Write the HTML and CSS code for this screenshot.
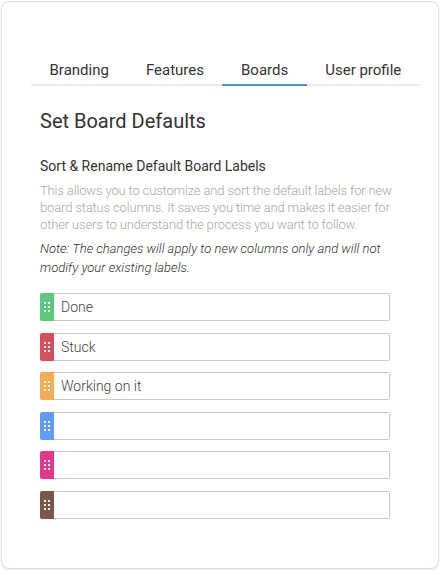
FILE: index.html
```html
<!DOCTYPE html>
<html lang="en">
<head>
<meta charset="utf-8">
<title>Board Defaults</title>
<link rel="stylesheet" href="styles.css">
</head>
<body>
<div class="card">
  <nav class="tabs">
    <div class="tab">Branding</div>
    <div class="tab">Features</div>
    <div class="tab active">Boards</div>
    <div class="tab">User profile</div>
  </nav>
  <section class="content">
    <h1 class="title">Set Board Defaults</h1>
    <h2 class="subtitle">Sort &amp; Rename Default Board Labels</h2>
    <p class="desc">This allows you to customize and sort the default labels for new board status columns. It saves you time and makes it easier for other users to understand the process you want to follow.</p>
    <p class="note">Note: The changes will apply to new columns only and will not modify your existing labels.</p>
    <div class="labels">
      <div class="label-row">
        <div class="handle green"><svg width="6" height="10" viewBox="0 0 6 10"><rect x="0" y="0" width="2" height="2"/><rect x="4" y="0" width="2" height="2"/><rect x="0" y="4" width="2" height="2"/><rect x="4" y="4" width="2" height="2"/><rect x="0" y="8" width="2" height="2"/><rect x="4" y="8" width="2" height="2"/></svg></div>
        <div class="label-input">Done</div>
      </div>
      <div class="label-row">
        <div class="handle red"><svg width="6" height="10" viewBox="0 0 6 10"><rect x="0" y="0" width="2" height="2"/><rect x="4" y="0" width="2" height="2"/><rect x="0" y="4" width="2" height="2"/><rect x="4" y="4" width="2" height="2"/><rect x="0" y="8" width="2" height="2"/><rect x="4" y="8" width="2" height="2"/></svg></div>
        <div class="label-input">Stuck</div>
      </div>
      <div class="label-row">
        <div class="handle orange"><svg width="6" height="10" viewBox="0 0 6 10"><rect x="0" y="0" width="2" height="2"/><rect x="4" y="0" width="2" height="2"/><rect x="0" y="4" width="2" height="2"/><rect x="4" y="4" width="2" height="2"/><rect x="0" y="8" width="2" height="2"/><rect x="4" y="8" width="2" height="2"/></svg></div>
        <div class="label-input">Working on it</div>
      </div>
      <div class="label-row">
        <div class="handle blue"><svg width="6" height="10" viewBox="0 0 6 10"><rect x="0" y="0" width="2" height="2"/><rect x="4" y="0" width="2" height="2"/><rect x="0" y="4" width="2" height="2"/><rect x="4" y="4" width="2" height="2"/><rect x="0" y="8" width="2" height="2"/><rect x="4" y="8" width="2" height="2"/></svg></div>
        <div class="label-input"></div>
      </div>
      <div class="label-row">
        <div class="handle pink"><svg width="6" height="10" viewBox="0 0 6 10"><rect x="0" y="0" width="2" height="2"/><rect x="4" y="0" width="2" height="2"/><rect x="0" y="4" width="2" height="2"/><rect x="4" y="4" width="2" height="2"/><rect x="0" y="8" width="2" height="2"/><rect x="4" y="8" width="2" height="2"/></svg></div>
        <div class="label-input"></div>
      </div>
      <div class="label-row">
        <div class="handle brown"><svg width="6" height="10" viewBox="0 0 6 10"><rect x="0" y="0" width="2" height="2"/><rect x="4" y="0" width="2" height="2"/><rect x="0" y="4" width="2" height="2"/><rect x="4" y="4" width="2" height="2"/><rect x="0" y="8" width="2" height="2"/><rect x="4" y="8" width="2" height="2"/></svg></div>
        <div class="label-input"></div>
      </div>
    </div>
  </section>
</div>
</body>
</html>
```

FILE: styles.css
```css
* { box-sizing: border-box; }
html, body { margin: 0; padding: 0; background: #fff; }
body {
  font-family: Roboto, "Liberation Sans", sans-serif;
  color: #333;
}
.card {
  margin: 1px;
  height: 568px;
  border: 1px solid #dedede;
  border-radius: 8px;
  box-shadow: 0 1px 2px rgba(0, 0, 0, 0.06);
  padding-top: 58px;
  background: #fff;
}
.tabs {
  display: flex;
  margin: 0 18px 0 29px;
  border-bottom: 2px solid #eeeeee;
}
.tab {
  font-size: 15px;
  line-height: 20px;
  padding: 0 18.5px 4px;
  color: #333;
  margin-bottom: -2px;
  border-bottom: 2px solid transparent;
}
.tab.active { border-bottom-color: #4a90e2; }
.content {
  padding-left: 38px;
  width: 388px;
}
.title {
  margin: 23px 0 0;
  font-size: 20px;
  line-height: 24px;
  font-weight: 400;
  color: #333;
}
.subtitle {
  margin: 24px 0 0;
  font-size: 14px;
  line-height: 18px;
  font-weight: 400;
  color: #333;
}
.desc {
  margin: 7px -6px 0 0;
  font-size: 13px;
  line-height: 17px;
  font-weight: 300;
  letter-spacing: -0.15px;
  color: #a8a8a8;
}
.note {
  margin: 6px 0 0;
  font-size: 13px;
  line-height: 19px;
  font-weight: 300;
  font-style: italic;
  color: #333;
}
.labels {
  margin-top: 16px;
  display: flex;
  flex-direction: column;
  gap: 11.6px;
}
.label-row {
  display: flex;
  height: 28px;
}
.handle {
  width: 14px;
  flex: none;
  display: flex;
  align-items: center;
  justify-content: center;
  border-radius: 2px 0 0 2px;
}
.handle svg { fill: #ffffff; opacity: 0.92; display: block; }
.green { background: #5cc97e; }
.red { background: #d4505f; }
.orange { background: #f2ad52; }
.blue { background: #629bf4; }
.pink { background: #e6388a; }
.brown { background: #7a5749; }
.label-input {
  flex: 1;
  border: 1px solid #c8c8c8;
  border-left: none;
  border-radius: 0 2px 2px 0;
  font-size: 14px;
  line-height: 26px;
  font-weight: 300;
  color: #444;
  padding-left: 7px;
}
```
